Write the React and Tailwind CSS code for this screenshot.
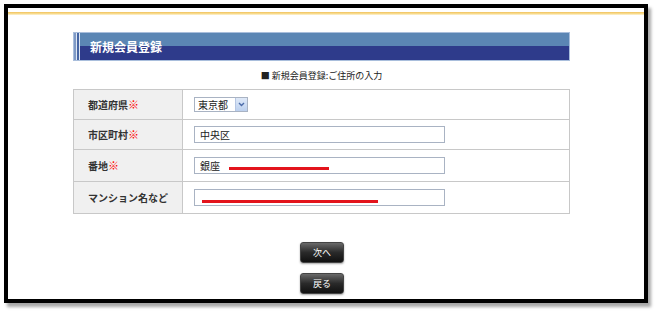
import React from "react";

const font = { fontFamily: '"Noto Sans CJK JP", "Noto Sans", sans-serif' };

function Label({ text, req }) {
  return (
    <div className="w-[109px] shrink-0 bg-[#f0f0f0] border-r border-[#c8c8c8] flex items-center pl-[14px] text-[10px] font-bold text-[#333]">
      <span>{text}</span>
      {req && <span className="text-[#ff0000] font-black text-[11px] leading-none">※</span>}
    </div>
  );
}

function Row({ children, h, last }) {
  return (
    <div className={`flex ${h} ${last ? "" : "border-b border-[#c8c8c8]"}`}>{children}</div>
  );
}

function TextBox({ children }) {
  return (
    <div className="relative w-[251px] h-[17px] border border-[#a9b3c3] bg-white flex items-center pl-[5px] text-[10px] text-[#222]">
      {children}
    </div>
  );
}

function Btn({ text }) {
  return (
    <div className="w-[44px] h-[21px] rounded-[3px] bg-gradient-to-b from-[#6a6a6a] via-[#2a2a2a] to-[#111] border border-[#444] shadow-[0_1px_2px_rgba(0,0,0,0.35)] flex items-center justify-center text-[9px] text-white">
      {text}
    </div>
  );
}

export default function App() {
  return (
    <div className="w-[656px] h-[314px] bg-white pt-[4px] pl-[4px]" style={font}>
      <div className="w-[644px] h-[299px] border-4 border-black bg-white shadow-[3px_4px_3px_rgba(0,0,0,0.35)] flex flex-col">
        <div className="mt-[4px] h-[3px] bg-gradient-to-b from-[#f2c25a] via-[#f7d98a] to-[#fdf4d6]" />
        <div className="ml-[65px] w-[497px] flex flex-col">
          <div className="mt-[17px] h-[29px] border border-[#a9bedc] flex relative overflow-hidden">
            <div className="w-[2px] bg-[#7f9ac6]" />
            <div className="w-[1px] bg-[#dfe8f4]" />
            <div className="w-[2px] bg-[#4666a4]" />
            <div className="w-[1px] bg-[#dfe8f4]" />
            <div className="flex-1 flex flex-col">
              <div className="h-[13px] bg-[#5b86b4]" />
              <div className="flex-1 bg-[#2e3b8b]" />
            </div>
            <div className="absolute left-[16px] top-0 h-full flex items-center text-[12px] font-bold text-white">
              新規会員登録
            </div>
          </div>
          <div className="mt-[8px] h-[14px] flex items-center justify-center text-[9px] text-[#222]">
            ■ 新規会員登録:ご住所の入力
          </div>
          <div className="mt-[6px] border border-[#c8c8c8] flex flex-col">
            <Row h="h-[30px]">
              <Label text="都道府県" req />
              <div className="flex-1 flex items-center pl-[11px]">
                <div className="w-[54px] h-[15px] border border-[#a9b3c3] bg-white flex items-center text-[10px] text-[#222]">
                  <span className="pl-[3px] flex-1">東京都</span>
                  <div className="w-[12px] h-[13px] bg-gradient-to-b from-[#dfe9f8] to-[#bcd0ee] border-l border-[#b5c6e3] flex items-center justify-center">
                    <svg width="7" height="5" viewBox="0 0 7 5">
                      <path d="M1 1 L3.5 3.5 L6 1" stroke="#4a6aa8" strokeWidth="1.4" fill="none" />
                    </svg>
                  </div>
                </div>
              </div>
            </Row>
            <Row h="h-[30px]">
              <Label text="市区町村" req />
              <div className="flex-1 flex items-center pl-[11px]">
                <TextBox>中央区</TextBox>
              </div>
            </Row>
            <Row h="h-[32px]">
              <Label text="番地" req />
              <div className="flex-1 flex items-center pl-[11px]">
                <TextBox>
                  銀座
                  <div className="absolute left-[34px] top-[9px] w-[100px] h-[3px] bg-[#e3141c]" />
                </TextBox>
              </div>
            </Row>
            <Row h="h-[31px]" last>
              <Label text="マンション名など" />
              <div className="flex-1 flex items-center pl-[11px]">
                <TextBox>
                  <div className="absolute left-[7px] top-[10px] w-[176px] h-[3px] bg-[#e3141c]" />
                </TextBox>
              </div>
            </Row>
          </div>
          <div className="mt-[28px] flex flex-col items-center gap-[10px] pl-[1px]">
            <Btn text="次へ" />
            <Btn text="戻る" />
          </div>
        </div>
      </div>
    </div>
  );
}
